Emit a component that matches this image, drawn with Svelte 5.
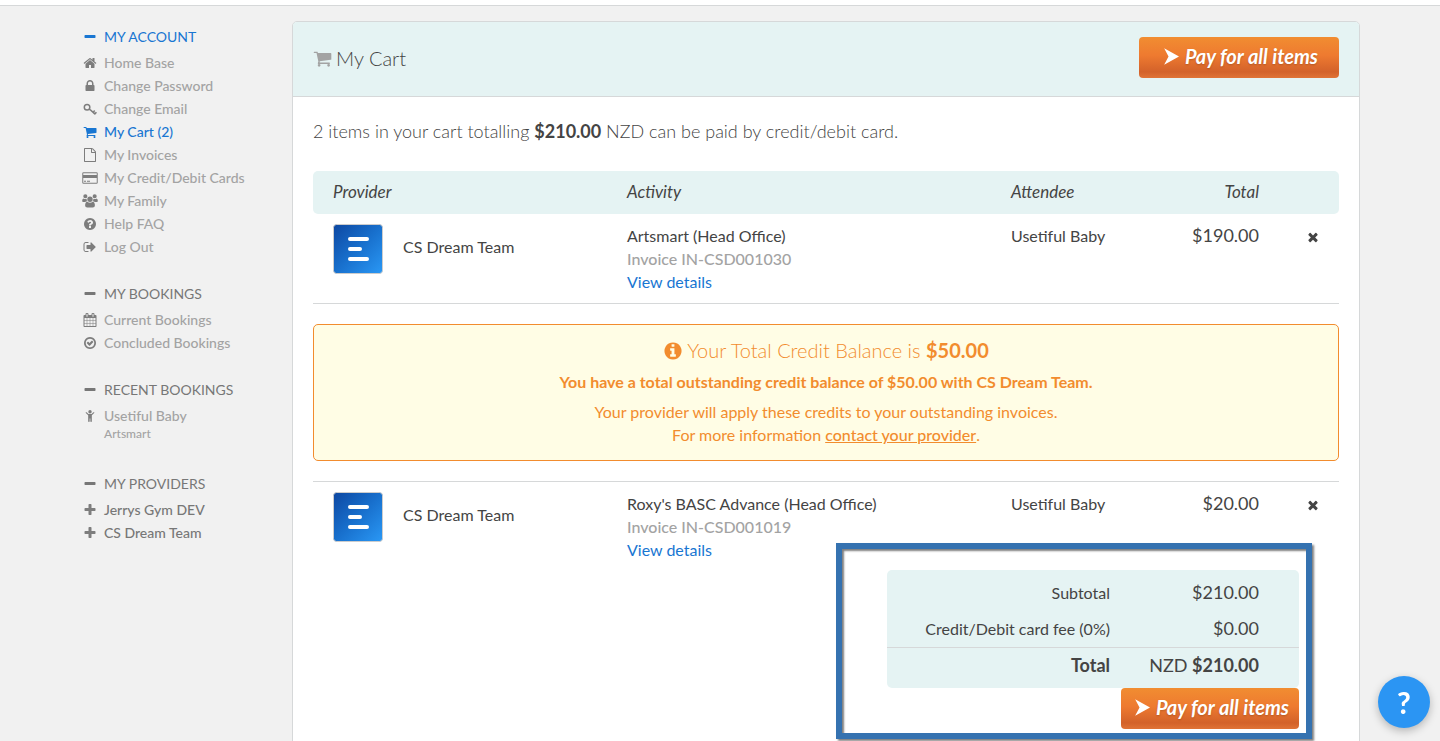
<script>
	const circle = "M1664 896q0 209-103 385.5t-279.5 279.5-385.5 103-385.5-103-279.5-279.5-103-385.5 103-385.5 279.5-279.5 385.5-103 385.5 103 279.5 279.5 103 385.5z";

	const icons = {
		minus: "M1600 736v192q0 40-28 68t-68 28h-1216q-40 0-68-28t-28-68v-192q0-40 28-68t68-28h1216q40 0 68 28t28 68z",
		plus: "M1600 736v192q0 40-28 68t-68 28h-416v416q0 40-28 68t-68 28h-192q-40 0-68-28t-28-68v-416h-416q-40 0-68-28t-28-68v-192q0-40 28-68t68-28h416v-416q0-40 28-68t68-28h192q40 0 68 28t28 68v416h416q40 0 68 28t28 68z",
		home: "M1472 992v480q0 26-19 45t-45 19h-384v-384h-256v384h-384q-26 0-45-19t-19-45v-480q0-1 .5-3t.5-3l575-474 575 474q1 2 1 6zm223-69l-62 74q-8 9-21 11h-3q-13 0-21-7l-692-577-692 577q-12 8-24 7-13-2-21-11l-62-74q-8-10-7-23.5t11-21.5l719-599q32-26 76-26t76 26l244 204v-195q0-14 9-23t23-9h192q14 0 23 9t9 23v408l219 182q10 8 11 21.5t-7 23.5z",
		lock: "M640 768h512v-192q0-106-75-181t-181-75-181 75-75 181v192zm832 96v576q0 40-28 68t-68 28h-960q-40 0-68-28t-28-68v-576q0-40 28-68t68-28h32v-192q0-184 132-316t316-132 316 132 132 316v192h32q40 0 68 28t28 68z",
		key: "M520 220a450 450 0 1 1 0 900a450 450 0 1 1 0-900zm0 190a260 260 0 1 0 0 520a260 260 0 1 0 0-520zM960 880L1290 1170 1420 1030 1570 1160 1440 1310 1510 1370 1650 1240 1790 1370 1590 1590 1480 1640 820 1020z",
		cart: "M704 1536q0 52-38 90t-90 38-90-38-38-90 38-90 90-38 90 38 38 90zm896 0q0 52-38 90t-90 38-90-38-38-90 38-90 90-38 90 38 38 90zm128-1088v512q0 24-16.5 42.5t-40.5 21.5l-1044 122q13 60 13 70 0 16-24 64h920q26 0 45 19t19 45-19 45-45 19h-1024q-26 0-45-19t-19-45q0-11 8-31.5t16-36 21.5-40 15.5-29.5l-177-823h-204q-26 0-45-19t-19-45 19-45 45-19h256q16 0 28.5 6.5t19.5 15.5 13 24.5 8 26 5.5 29.5 4.5 26h1201q26 0 45 19t19 45z",
		file: "M1596 380q28 28 48 76t20 88v1152q0 40-28 68t-68 28h-1344q-40 0-68-28t-28-68v-1600q0-40 28-68t68-28h896q40 0 88 20t76 48zm-444-244v376h376q-10-29-22-41l-313-313q-12-12-41-22zm384 1528v-1024h-416q-40 0-68-28t-28-68v-416h-768v1536h1280z",
		card: "M64 160h1664q160 0 160 160v1152q0 160-160 160h-1664q-160 0-160-160v-1152q0-160 160-160zm0 128q-32 0-32 32v192h1728v-192q0-32-32-32zm-32 608v576q0 32 32 32h1664q32 0 32-32v-576zm96 352h256v128h-256zm384 0h384v128h-384z",
		users: "M896 330a345 345 0 1 1 0 690a345 345 0 1 1 0-690zM300 20a265 265 0 1 1 0 530a265 265 0 1 1 0-530zM1492 20a265 265 0 1 1 0 530a265 265 0 1 1 0-530zM560 1000q140 120 336 120t336-120q290 30 290 470 0 260-270 260h-712q-270 0-270-260 0-440 290-470zM80 560q100 90 220 90 100 0 170-35-20 200 70 310-150 0-270 110h-230q-150 0-150-140 0-310 190-335zM1712 560q-100 90-220 90-100 0-170-35 20 200-70 310 150 0 270 110h230q150 0 150-140 0-310-190-335z",
		help: "M1024 1376v-192q0-14-9-23t-23-9h-192q-14 0-23 9t-9 23v192q0 14 9 23t23 9h192q14 0 23-9t9-23zm256-672q0-88-55.5-163t-138.5-116-170-41q-243 0-371 213-15 24 8 42l132 100q7 6 19 6 16 0 25-12 53-68 86-92 34-24 86-24 48 0 85.5 26t37.5 59q0 38-20 61t-68 45q-63 28-115.5 86.5t-52.5 125.5v36q0 14 9 23t23 9h192q14 0 23-9t9-23q0-19 21.5-49.5t54.5-49.5q32-18 49-28.5t46-35 44.5-48 28-60.5 12.5-81z" + circle,
		info: "M1152 1376v-160q0-14-9-23t-23-9h-96v-512q0-14-9-23t-23-9h-320q-14 0-23 9t-9 23v160q0 14 9 23t23 9h96v320h-96q-14 0-23 9t-9 23v160q0 14 9 23t23 9h448q14 0 23-9t9-23zm-128-896v-160q0-14-9-23t-23-9h-192q-14 0-23 9t-9 23v160q0 14 9 23t23 9h192q14 0 23-9t9-23z" + circle,
		logout: "M704 1440q0 4 1 20t.5 26.5-3 23.5-10 19.5-20.5 6.5h-320q-119 0-203.5-84.5t-84.5-203.5v-704q0-119 84.5-203.5t203.5-84.5h320q13 0 22.5 9.5t9.5 22.5q0 4 1 20t.5 26.5-3 23.5-10 19.5-20.5 6.5h-320q-66 0-113 47t-47 113v704q0 66 47 113t113 47h312l11.5 1 11.5 3 8 5.5 7 9 2 13.5zm928-544q0 26-19 45l-544 544q-19 19-45 19t-45-19-19-45v-288h-448q-26 0-45-19t-19-45v-384q0-26 19-45t45-19h448v-288q0-26 19-45t45-19 45 19l544 544q19 19 19 45z",
		calendar: "M192 1664h288v-288h-288v288zm352 0h320v-288h-320v288zm-352-352h288v-320h-288v320zm352 0h320v-320h-320v320zm-352-384h288v-288h-288v288zm736 736h320v-288h-320v288zm-384-736h320v-288h-320v288zm768 736h288v-288h-288v288zm-384-352h320v-320h-320v320zm-352-864v-288q0-13-9.5-22.5t-22.5-9.5h-64q-13 0-22.5 9.5t-9.5 22.5v288q0 13 9.5 22.5t22.5 9.5h64q13 0 22.5-9.5t9.5-22.5zm736 864h288v-320h-288v320zm-384-384h320v-288h-320v288zm384 0h288v-288h-288v288zm32-480v-288q0-13-9.5-22.5t-22.5-9.5h-64q-13 0-22.5 9.5t-9.5 22.5v288q0 13 9.5 22.5t22.5 9.5h64q13 0 22.5-9.5t9.5-22.5zm384-64v1280q0 52-38 90t-90 38h-1408q-52 0-90-38t-38-90v-1280q0-52 38-90t90-38h128v-96q0-66 47-113t113-47h64q66 0 113 47t47 113v96h384v-96q0-66 47-113t113-47h64q66 0 113 47t47 113v96h128q52 0 90 38t38 90z",
		done: "M1299 813l-422 422q-19 19-45 19t-45-19l-294-294q-19-19-19-45t19-45l102-102q19-19 45-19t45 19l147 147 275-275q19-19 45-19t45 19l102 102q19 19 19 45t-19 45zm141 83q0-148-73-273t-198-198-273-73-273 73-198 198-73 273 73 273 198 198 273 73 273-73 198-198 73-273z" + circle,
		child: "M896 128a220 220 0 1 1 0 440a220 220 0 1 1 0-440zM1430 420q40 40 0 100l-300 290v760q0 100-95 100t-95-100v-350h-88v350q0 100-95 100t-95-100v-760l-300-290q-40-60 0-100t100 0l240 220h388l240-220q60-40 100 0z",
		times: "M1490 1322q0 40-28 68l-136 136q-28 28-68 28t-68-28l-294-294-294 294q-28 28-68 28t-68-28l-136-136q-28-28-28-68t28-68l294-294-294-294q-28-28-28-68t28-68l136-136q28-28 68-28t68 28l294 294 294-294q28-28 68-28t68 28l136 136q28 28 28 68t-28 68l-294 294 294 294q28 28 28 68z",
		arrow: "M128-96L1792 832 128 1760 620 832z"
	};

	let sections = $state([
		{
			title: "MY ACCOUNT",
			active: true,
			open: true,
			links: [
				{ icon: "home", label: "Home Base" },
				{ icon: "lock", label: "Change Password" },
				{ icon: "key", label: "Change Email" },
				{ icon: "cart", label: "My Cart (2)", active: true },
				{ icon: "file", label: "My Invoices" },
				{ icon: "card", label: "My Credit/Debit Cards" },
				{ icon: "users", label: "My Family" },
				{ icon: "help", label: "Help FAQ" },
				{ icon: "logout", label: "Log Out" }
			]
		},
		{
			title: "MY BOOKINGS",
			open: true,
			links: [
				{ icon: "calendar", label: "Current Bookings" },
				{ icon: "done", label: "Concluded Bookings" }
			]
		},
		{
			title: "RECENT BOOKINGS",
			open: true,
			links: [{ icon: "child", label: "Usetiful Baby", sub: "Artsmart" }]
		},
		{
			title: "MY PROVIDERS",
			open: true,
			links: [
				{ icon: "plus", label: "Jerrys Gym DEV", strong: true },
				{ icon: "plus", label: "CS Dream Team", strong: true }
			]
		}
	]);

	const items = [
		{
			provider: "CS Dream Team",
			activity: "Artsmart (Head Office)",
			invoice: "Invoice IN-CSD001030",
			attendee: "Usetiful Baby",
			total: "$190.00",
			credit: true
		},
		{
			provider: "CS Dream Team",
			activity: "Roxy's BASC Advance (Head Office)",
			invoice: "Invoice IN-CSD001019",
			attendee: "Usetiful Baby",
			total: "$20.00"
		}
	];
</script>

{#snippet icon(name)}
	<svg class="icon" viewBox="0 0 1792 1792" aria-hidden="true">
		<path fill-rule={name === "users" || name === "child" ? "nonzero" : "evenodd"} d={icons[name]} />
	</svg>
{/snippet}

<div class="topbar"></div>

<div class="page">
	<nav class="sidebar">
		{#each sections as section}
			<section>
				<button
					class="toggle"
					class:active={section.active}
					aria-expanded={section.open}
					onclick={() => (section.open = !section.open)}
				>
					{@render icon(section.open ? "minus" : "plus")}
					{section.title}
				</button>
				{#if section.open}
					<ul>
						{#each section.links as link}
							<li>
								<a href="#top" class:active={link.active} class:strong={link.strong}>
									{@render icon(link.icon)}
									{link.label}
								</a>
								{#if link.sub}<div class="sub">{link.sub}</div>{/if}
							</li>
						{/each}
					</ul>
				{/if}
			</section>
		{/each}
	</nav>

	<main class="card">
		<header>
			<h1>{@render icon("cart")} My Cart</h1>
			<button class="pay wide">{@render icon("arrow")} Pay for all items</button>
		</header>

		<div class="body">
			<p class="intro">2 items in your cart totalling <b>$210.00</b> NZD can be paid by credit/debit card.</p>

			<table class="items">
				<thead>
					<tr>
						<th class="provider">Provider</th>
						<th class="activity">Activity</th>
						<th class="attendee">Attendee</th>
						<th class="total">Total</th>
						<th class="remove"></th>
					</tr>
				</thead>
				<tbody>
					{#each items as item}
						<tr class:ruled={item.credit}>
							<td>
								<svg class="logo" viewBox="0 0 50 50" aria-hidden="true">
									<defs>
										<linearGradient id="logo-fill" x1="0" y1="0" x2="1" y2="1">
											<stop offset="0" stop-color="#0d47a1" />
											<stop offset="0.5" stop-color="#1870cd" />
											<stop offset="1" stop-color="#2a98f5" />
										</linearGradient>
									</defs>
									<rect x="0.5" y="0.5" width="49" height="49" rx="3" fill="url(#logo-fill)" stroke="#ccc" />
									<path d="M17 15h17M17 25h10M17 35h17" stroke="#fff" stroke-width="4" stroke-linecap="round" />
								</svg>
								{item.provider}
							</td>
							<td>
								<div>{item.activity}</div>
								<div class="invoice">{item.invoice}</div>
								<a href="#top">View details</a>
							</td>
							<td>{item.attendee}</td>
							<td class="total amount">{item.total}</td>
							<td class="remove">
								<button class="x" aria-label="Remove">{@render icon("times")}</button>
							</td>
						</tr>
						{#if item.credit}
							<tr class="ruled">
								<td class="notice" colspan="5">
									<div class="credit">
										<h2>{@render icon("info")} <span>Your Total Credit Balance is <b>$50.00</b></span></h2>
										<h3>You have a total outstanding credit balance of $50.00 with CS Dream Team.</h3>
										<p>
											Your provider will apply these credits to your outstanding invoices.<br />
											For more information <a href="#top">contact your provider</a>.
										</p>
									</div>
								</td>
							</tr>
						{/if}
					{/each}
				</tbody>
			</table>

			<div class="summary">
				<table class="totals">
					<tbody>
						<tr><th>Subtotal</th><td>$210.00</td></tr>
						<tr><th>Credit/Debit card fee (0%)</th><td>$0.00</td></tr>
					</tbody>
					<tbody class="grand">
						<tr><th>Total</th><td>NZD <b>$210.00</b></td></tr>
					</tbody>
				</table>
				<button class="pay">{@render icon("arrow")} Pay for all items</button>
				<div class="marker"></div>
			</div>
		</div>
	</main>
</div>

<button class="help" aria-label="Help">?</button>

<style>
	:global(body) {
		background: #f1f1f1;
		color: #444;
		font: 16px/23px Lato, "Liberation Sans", sans-serif;
	}
	h1, h2, h3, p, ul {
		margin: 0;
		padding: 0;
		font-weight: 400;
	}
	ul {
		list-style: none;
	}
	a {
		color: #1976d2;
		text-decoration: none;
	}
	button {
		border: 0;
		padding: 0;
		background: none;
		color: inherit;
		font: inherit;
		cursor: pointer;
	}
	table {
		border-collapse: separate;
		border-spacing: 0;
	}
	.icon {
		width: 14px;
		height: 14px;
		fill: currentColor;
		overflow: visible;
		flex: none;
	}

	.topbar {
		height: 5px;
		background: #fff;
		border-bottom: 1px solid #d6d8d9;
	}
	.page {
		display: flex;
		max-width: 1280px;
		margin: 0 auto;
		padding: 15px 80px 20px;
	}

	/* sidebar */
	.sidebar {
		flex: none;
		width: 212px;
		padding-top: 4px;
		font-size: 14px;
	}
	section {
		margin-bottom: 24px;
	}
	.toggle, .sidebar a {
		display: flex;
		align-items: center;
		gap: 7px;
		padding-left: 3px;
	}
	.toggle {
		margin-bottom: 3px;
		color: #777;
	}
	.sidebar a {
		color: #a3a3a3;
		font-weight: 500;
	}
	.sidebar a .icon {
		color: #7d7d7d;
	}
	.sidebar a.strong {
		color: #777;
	}
	.sidebar .active, .sidebar .active .icon {
		color: #1976d2;
	}
	.sub {
		padding: 0 0 7px 24px;
		color: #a3a3a3;
		font-size: 12px;
		font-weight: 500;
		line-height: 14px;
	}

	/* cart */
	.card {
		flex: 1;
		border: 1px solid #d6d8d9;
		border-radius: 5px;
		background: #fff;
	}
	header {
		display: flex;
		justify-content: space-between;
		align-items: flex-start;
		padding: 15px 20px 17px;
		border-bottom: 1px solid #d6d8d9;
		border-radius: 4px 4px 0 0;
		background: #e5f3f3;
	}
	h1 {
		display: flex;
		align-items: center;
		gap: 4px;
		font-size: 20px;
		font-weight: 300;
		line-height: 42px;
	}
	h1 .icon {
		width: 19px;
		height: 19px;
		color: #a3a3a3;
	}
	.pay {
		display: flex;
		align-items: center;
		gap: 6px;
		height: 41px;
		padding: 0 10px 2px 13px;
		border-radius: 4px;
		background: linear-gradient(#f18d31, #ee7a30 45%, #d3622a 85%, #e07336);
		color: #fff;
		font-size: 20px;
		font-style: italic;
		font-weight: 700;
		text-shadow: 0 1px 2px rgba(0, 0, 0, 0.2);
	}
	.pay .icon {
		width: 16px;
		height: 16px;
	}
	.pay.wide {
		padding: 0 21px 2px 24px;
	}
	.body {
		padding: 23px 20px 20px;
	}
	.intro {
		margin-bottom: 28px;
		font-size: 18px;
		font-weight: 300;
	}
	.items {
		width: 100%;
		table-layout: fixed;
	}
	th {
		padding: 9px 20px 11px;
		font-size: 17px;
		font-style: italic;
		font-weight: 400;
		text-align: left;
	}
	thead th {
		background: #e5f3f3;
	}
	thead th:first-child {
		border-radius: 5px 0 0 5px;
	}
	thead th:last-child {
		border-radius: 0 5px 5px 0;
	}
	.items td {
		padding: 10px 20px;
		vertical-align: top;
	}
	.items tr:last-child td {
		padding-bottom: 9px;
	}
	.ruled td {
		border-bottom: 1px solid #d6d8d9;
	}
	.provider {
		width: 254px;
	}
	.activity {
		width: 344px;
	}
	.items .total {
		width: 90px;
		padding-right: 28px;
		text-align: right;
	}
	.items .amount {
		font-size: 18px;
	}
	.items .remove {
		width: 52px;
		padding-left: 0;
		padding-right: 0;
		text-align: center;
	}
	.x {
		margin-top: 2px;
	}
	.logo {
		width: 50px;
		height: 50px;
		margin-right: 16px;
		vertical-align: middle;
	}
	.invoice {
		color: #a3a3a3;
		font-weight: 500;
	}
	.items .notice {
		padding: 20px 0;
	}
	.credit {
		padding: 14px 20px;
		border: 1px solid #f28c2e;
		border-radius: 5px;
		background: #fffde5;
		color: #f28c2e;
		text-align: center;
	}
	h2 {
		display: flex;
		justify-content: center;
		align-items: center;
		gap: 4px;
		font-size: 20px;
		font-weight: 300;
	}
	h2 b {
		font-weight: 700;
	}
	h2 .icon {
		width: 20px;
		height: 20px;
	}
	h3 {
		margin: 8px 0 7px;
		font-size: 16px;
		font-weight: 700;
	}
	.credit a {
		color: inherit;
		font-weight: 500;
		text-decoration: underline;
	}

	/* totals */
	.summary {
		position: relative;
		display: flex;
		flex-direction: column;
		align-items: flex-end;
		width: 412px;
		margin: 0 40px 0 auto;
	}
	.totals {
		width: 100%;
		padding: 5px 0;
		border-radius: 5px;
		background: #e5f3f3;
	}
	.totals th, .totals td {
		padding: 6px 0 7px;
		text-align: right;
	}
	.totals th {
		font-size: 16px;
		font-style: normal;
		font-weight: 400;
	}
	.totals td {
		width: 149px;
		padding-right: 40px;
		font-size: 18px;
	}
	.totals .grand th, .totals .grand td {
		padding-bottom: 6px;
		border-top: 1px solid #d6d8d9;
	}
	.totals .grand th {
		font-size: 18px;
		font-weight: 700;
	}
	.intro b, .grand b {
		font-weight: 700;
	}
	.marker {
		position: absolute;
		inset: -27px -13px -10px -51px;
		border: 6px solid #3572b0;
		box-shadow: 2px 2px 2px rgba(0, 0, 0, 0.5), inset 2px 2px 2px rgba(0, 0, 0, 0.5);
		pointer-events: none;
	}

	.help {
		position: fixed;
		right: 10px;
		bottom: 13px;
		width: 52px;
		height: 52px;
		border-radius: 50%;
		background: #2b95f3;
		box-shadow: 0 3px 8px rgba(0, 0, 0, 0.25);
		color: #fff;
		font-size: 30px;
		font-weight: 700;
	}
</style>
